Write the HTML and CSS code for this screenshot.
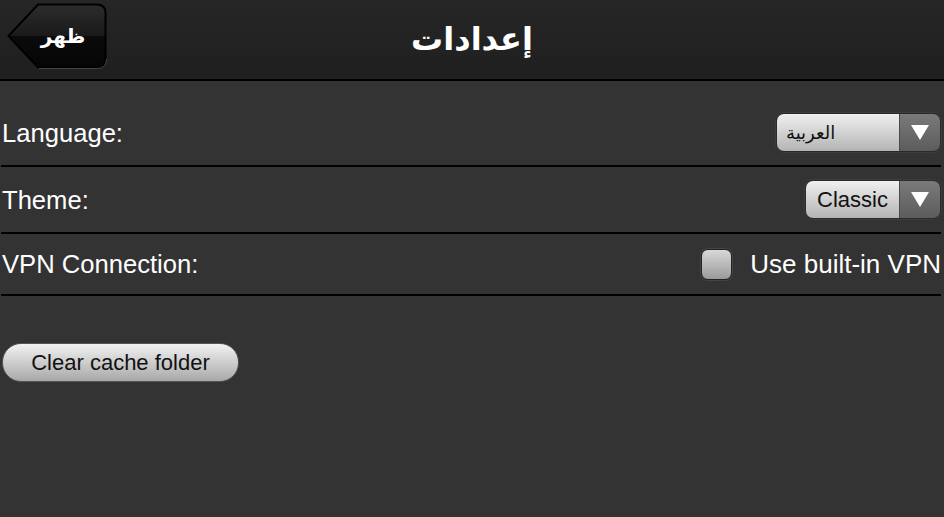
FILE: index.html
```html
<!DOCTYPE html>
<html lang="en">
<head>
    <meta charset="UTF-8">
    <meta name="viewport" content="width=device-width, initial-scale=1.0">
    <title>Settings</title>
    <link rel="stylesheet" href="styles.css">
</head>
<body>
    <div class="topbar">
        <a class="back-button" href="#">
            <svg class="back-shape" width="100" height="66" viewBox="0 0 100 66">
                <defs>
                    <linearGradient id="backFill" x1="0" y1="0" x2="0" y2="1">
                        <stop offset="0" stop-color="#2c2c2c"/>
                        <stop offset="0.5" stop-color="#1a1a1a"/>
                        <stop offset="0.5" stop-color="#0a0a0a"/>
                        <stop offset="1" stop-color="#050505"/>
                    </linearGradient>
                </defs>
                <path d="M31 1.5 H90 Q98.5 1.5 98.5 10 V56 Q98.5 64.5 90 64.5 H31 L1.5 33 Z" fill="url(#backFill)" stroke="#000" stroke-width="2"/>
                <path d="M32 65.5 H90 Q99.5 65.5 99.5 56" fill="none" stroke="#444" stroke-width="1"/>
            </svg>
            <span class="back-label" dir="rtl">ظهر</span>
        </a>
        <h1 class="title" dir="rtl">إعدادات</h1>
    </div>

    <div class="settings">
        <div class="setting-row">
            <span class="setting-label">Language:</span>
            <div class="dropdown lang">
                <span class="dropdown-value" dir="rtl">العربية</span>
                <span class="dropdown-arrow"></span>
            </div>
        </div>
        <div class="setting-row">
            <span class="setting-label">Theme:</span>
            <div class="dropdown">
                <span class="dropdown-value">Classic</span>
                <span class="dropdown-arrow"></span>
            </div>
        </div>
        <div class="setting-row">
            <span class="setting-label">VPN Connection:</span>
            <label class="check">
                <span class="check-box"></span>
                <span class="check-text">Use built-in VPN</span>
            </label>
        </div>
    </div>

    <button class="clear-button" type="button">Clear cache folder</button>
</body>
</html>
```

FILE: styles.css
```css
html, body {
    margin: 0;
    padding: 0;
}

body {
    width: 944px;
    height: 517px;
    background-color: #333333;
    color: #ffffff;
    font-family: "Liberation Sans", Arial, sans-serif;
    overflow: hidden;
}

/* top bar with back button and title */
.topbar {
    position: relative;
    height: 79px;
    background: linear-gradient(#262626, #1f1f1f);
    border-bottom: 2px solid #000000;
    display: flex;
    align-items: center;
    justify-content: center;
}

.back-button {
    position: absolute;
    left: 7px;
    top: 3px;
    width: 100px;
    height: 66px;
    display: flex;
    align-items: center;
    justify-content: center;
    text-decoration: none;
}

.back-shape {
    position: absolute;
    left: 0;
    top: 0;
}

.back-label {
    position: relative;
    margin-left: 12px;
    color: #ffffff;
    font-family: "DejaVu Sans", sans-serif;
    font-weight: bold;
    font-size: 20px;
}

.title {
    margin: 0 0 2px 0;
    font-family: "DejaVu Sans", sans-serif;
    font-weight: bold;
    font-size: 32px;
    color: #ffffff;
}

/* settings list */
.settings {
    margin: 19px 3px 0 1px;
}

.setting-row {
    display: flex;
    align-items: center;
    justify-content: space-between;
    padding: 13px 0;
    border-bottom: 2px solid #000000;
}

.setting-label {
    font-size: 25.6px;
    line-height: 34px;
    padding-left: 1px;
}

.dropdown {
    display: flex;
    height: 37px;
    border: 1px solid #2a2a2a;
    border-radius: 8px;
    overflow: hidden;
    box-shadow: 0 0 0 1px #3d3d3d;
    color: #111111;
}

.dropdown-value {
    display: flex;
    align-items: center;
    padding: 0 11px;
    font-size: 22px;
    background: linear-gradient(#f0f0f0, #b4b4b4);
}

.dropdown.lang .dropdown-value {
    font-family: "DejaVu Sans", sans-serif;
    font-size: 18px;
    direction: ltr;
    justify-content: flex-start;
    padding: 0 0 1px 9px;
    width: 113px;
}

.dropdown-arrow {
    width: 40px;
    border-left: 1px solid #4a4a4a;
    background: linear-gradient(#7a7a7a, #5c5c5c);
    position: relative;
}

.dropdown-arrow::after {
    content: "";
    position: absolute;
    left: 11px;
    top: 11px;
    border-left: 9px solid transparent;
    border-right: 9px solid transparent;
    border-top: 15px solid #ffffff;
}

.check {
    display: flex;
    align-items: center;
    gap: 18px;
}

.check-box {
    width: 29px;
    height: 29px;
    border: 1px solid #222222;
    border-radius: 7px;
    background: linear-gradient(#d8d8d8, #9a9a9a);
    box-shadow: 0 0 0 1px #444444;
}

.check-text {
    font-size: 26px;
    line-height: 34px;
}

/* bottom button */
.clear-button {
    margin: 47px 0 0 2px;
    width: 237px;
    height: 39px;
    border: 1px solid #555555;
    border-radius: 19px;
    background: linear-gradient(#f2f2f2, #a8a8a8);
    color: #111111;
    font-family: "Liberation Sans", Arial, sans-serif;
    font-size: 22px;
    cursor: pointer;
}
```
